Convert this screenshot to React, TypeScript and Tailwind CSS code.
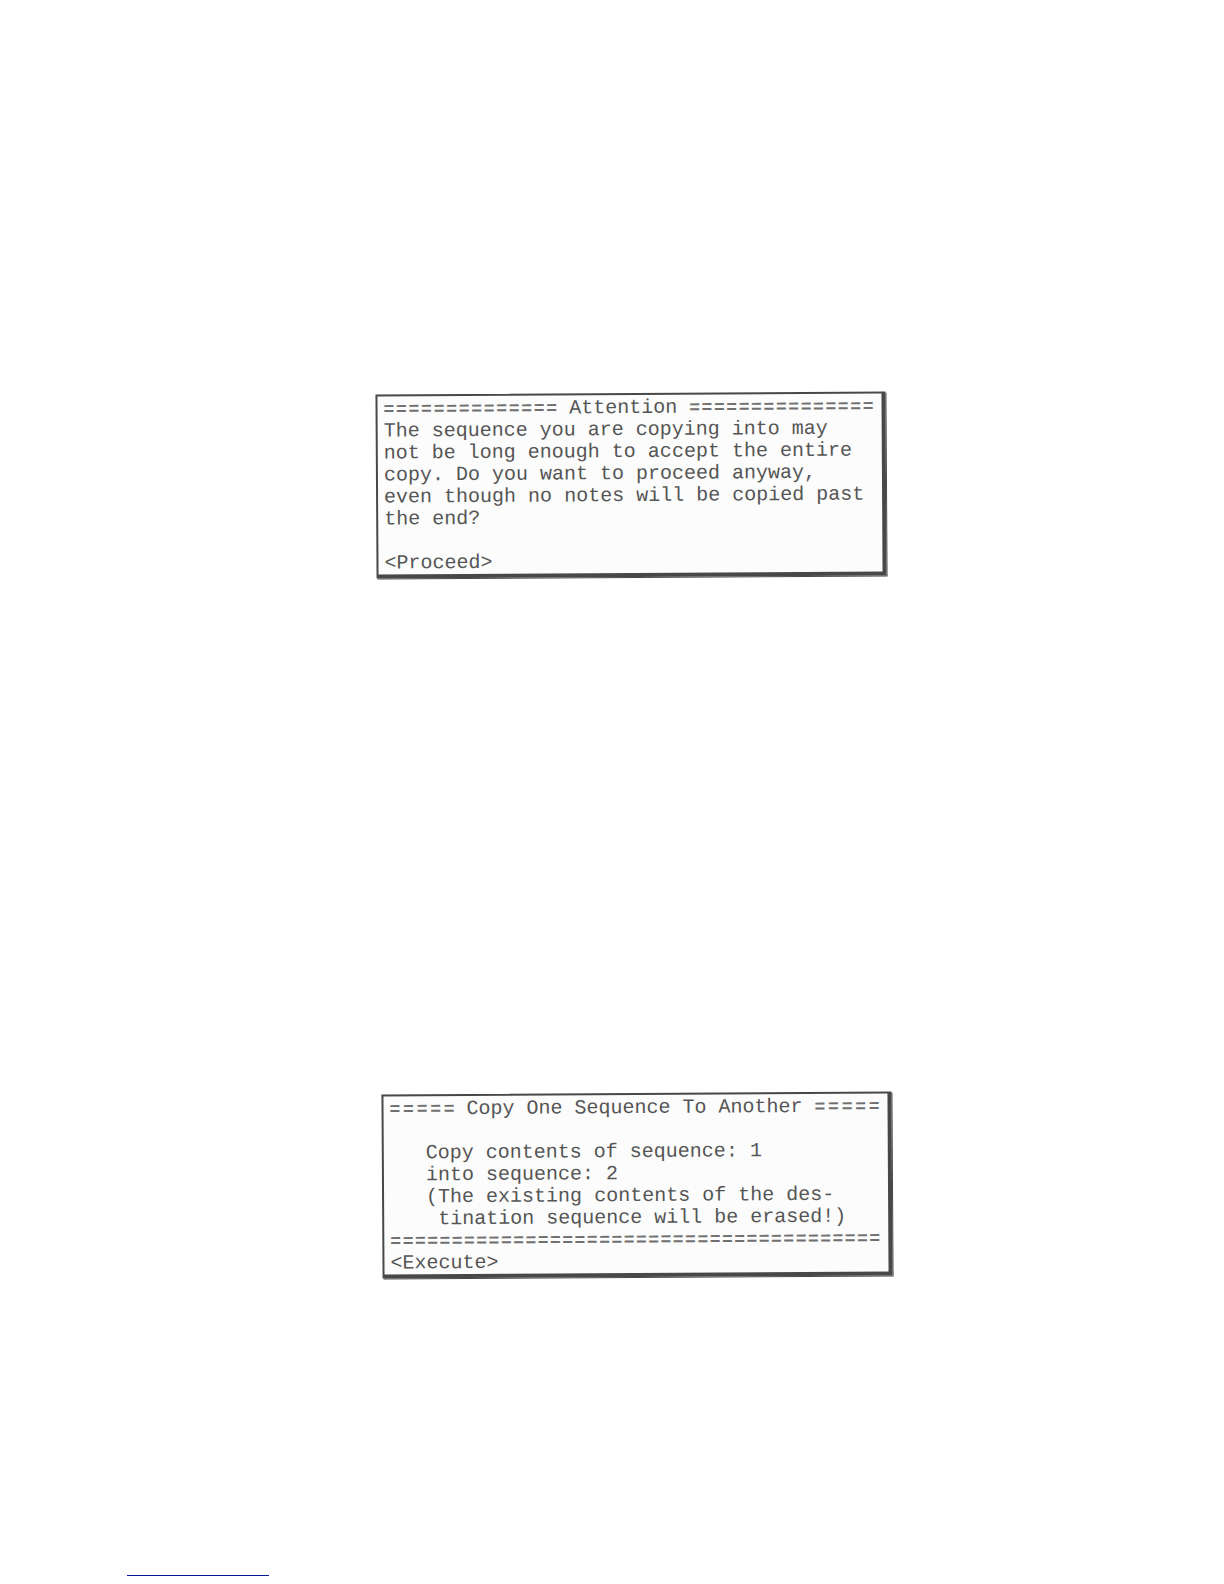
import { FC, ReactNode } from 'react'

type TPanelProps = {
  heading: string
  before: number
  after: number
  className?: string
  children: ReactNode
}

type TFieldProps = {
  id: string
  label: string
  value: string
}

/**
 * A run of bold equals signs, spread over the width it is given.
 */
const Rule: FC<{ length: number }> = ({ length }) => (
  <span
    aria-hidden="true"
    className="flex grow justify-between text-[18px] font-bold text-[#707070]"
  >
    {Array.from({ length }, (_, i) => (
      <span key={i}>=</span>
    ))}
  </span>
)

/**
 * A display panel with a heading set between two rules.
 */
const Panel: FC<TPanelProps> = ({
  heading,
  before,
  after,
  className = '',
  children,
}) => {
  return (
    <section
      className={`w-full max-w-[510px] -rotate-[0.35deg] border-2 border-r-4 border-b-4 border-[#484848] bg-[#fcfcfc] pt-0.5 pr-2 pl-1.5 shadow-[1px_1px_0_#484848] ${className}`}
    >
      <h2 className="flex gap-3">
        <Rule length={before} />
        {heading}
        <Rule length={after} />
      </h2>
      {children}
    </section>
  )
}

const Field: FC<TFieldProps> = ({ id, label, value }) => (
  <div className="flex gap-3">
    <label htmlFor={id}>{label}</label>
    <input
      id={id}
      defaultValue={value}
      className="h-[22px] w-6 bg-transparent p-0 outline-none"
    />
  </div>
)

const App: FC = () => {
  return (
    <div className="bg-white font-['Liberation_Mono',monospace] text-[20px] leading-[22px] text-[#555555]">
      <main className="flex flex-col items-center gap-[516px] pt-[393px] pl-[38px]">
        <Panel heading="Attention" before={14} after={15}>
          <p className="whitespace-pre-line">
            {`The sequence you are copying into may
            not be long enough to accept the entire
            copy. Do you want to proceed anyway,
            even though no notes will be copied past
            the end?`}
          </p>
          <button type="button" className="mt-[22px] block">
            {'<Proceed>'}
          </button>
        </Panel>

        <Panel
          heading="Copy One Sequence To Another"
          before={5}
          after={5}
          className="ml-3"
        >
          <div className="pt-[22px] pl-9">
            <Field id="source" label="Copy contents of sequence:" value="1" />
            <Field id="destination" label="into sequence:" value="2" />
            <p>(The existing contents of the des-</p>
            <p className="pl-3">tination sequence will be erased!)</p>
          </div>
          <div className="flex">
            <Rule length={40} />
          </div>
          <button type="button" className="block">
            {'<Execute>'}
          </button>
        </Panel>
      </main>

      <footer className="flex pt-[275px] pb-2 pl-[127px]">
        <a
          href="#top"
          aria-label="Back to top"
          className="h-6 w-[142px] border-b border-solid border-b-[#0a1a96]"
        />
      </footer>
    </div>
  )
}

export default App
